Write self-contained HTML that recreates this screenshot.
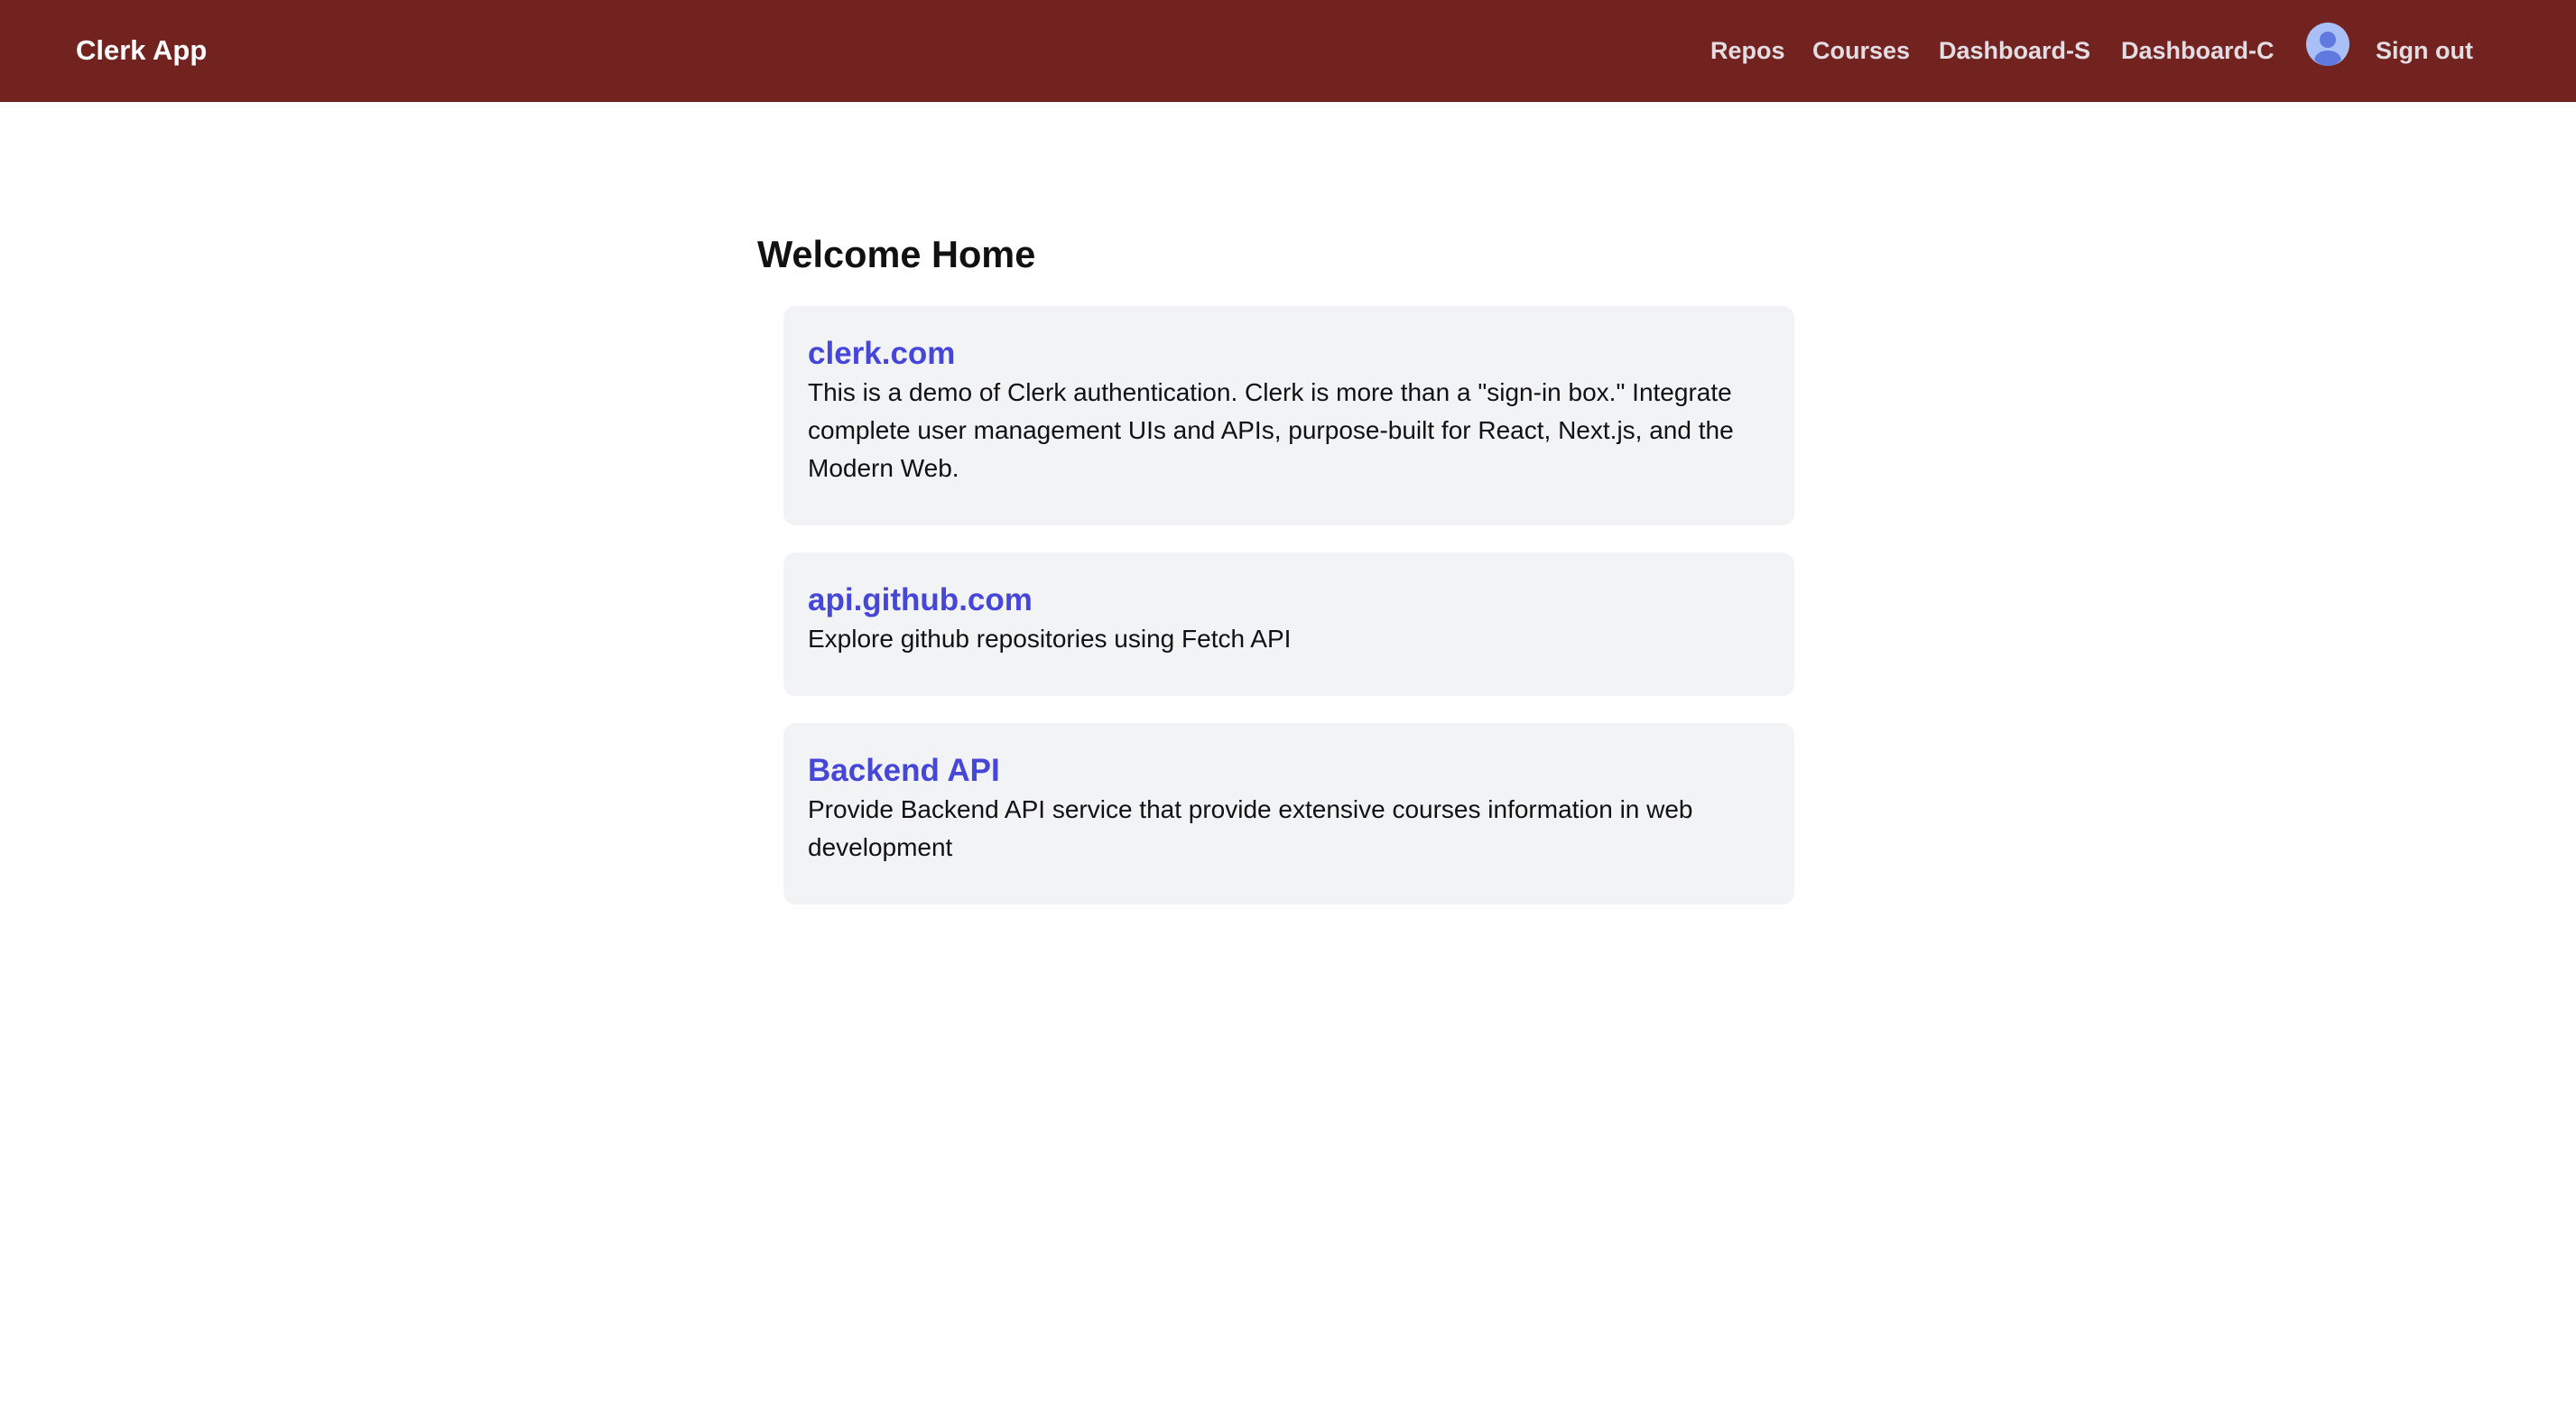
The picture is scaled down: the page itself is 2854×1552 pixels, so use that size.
<!DOCTYPE html>
<html><head><meta charset="utf-8"><style>
*{margin:0;padding:0;box-sizing:border-box}
html,body{width:2854px;height:1552px;background:#fff;font-family:"Liberation Sans",Arial,sans-serif;overflow:hidden}
.hdr{position:absolute;left:0;top:0;width:2854px;height:113px;background:#722320}
.brand{position:absolute;left:84px;top:37px;font-size:31px;font-weight:bold;color:#fff;line-height:38px}
.nav{position:absolute;top:37px;font-size:27px;font-weight:bold;color:#e3dde3;line-height:38px;white-space:nowrap}
.av{position:absolute;left:2555px;top:25px;width:48px;height:48px}
h1{position:absolute;left:839px;top:258px;font-size:41.5px;font-weight:bold;color:#111;line-height:48px}
.card{position:absolute;left:868px;width:1120px;background:#f2f3f5;border-radius:13px;padding:31px 27px 42px 27px}
.card h2{font-size:35px;font-weight:bold;color:#4646d8;line-height:44px}
.card p{font-size:28px;color:#111;line-height:42px;width:1066px}
</style></head><body>
<div class="hdr">
<div class="brand">Clerk App</div>
<div class="nav" style="left:1895px">Repos</div>
<div class="nav" style="left:2008px">Courses</div>
<div class="nav" style="left:2148px">Dashboard-S</div>
<div class="nav" style="left:2350px">Dashboard-C</div>
<svg class="av" viewBox="0 0 48 48"><circle cx="24" cy="24" r="24" fill="#a9c0f7"/><circle cx="24" cy="19" r="9" fill="#6079de"/><path d="M9 41 C11 33,18 31,24 31 C30 31,37 33,39 41 C35 46,29 48,24 48 C19 48,13 46,9 41Z" fill="#6079de"/></svg>
<div class="nav" style="left:2632px">Sign out</div>
</div>
<h1>Welcome Home</h1>
<div class="card" style="top:339px"><h2>clerk.com</h2><p>This is a demo of Clerk authentication. Clerk is more than a "sign-in box." Integrate complete user management UIs and APIs, purpose-built for React, Next.js, and the Modern Web.</p></div>
<div class="card" style="top:612px"><h2>api.github.com</h2><p>Explore github repositories using Fetch API</p></div>
<div class="card" style="top:801px"><h2>Backend API</h2><p>Provide Backend API service that provide extensive courses information in web development</p></div>
</body></html>
